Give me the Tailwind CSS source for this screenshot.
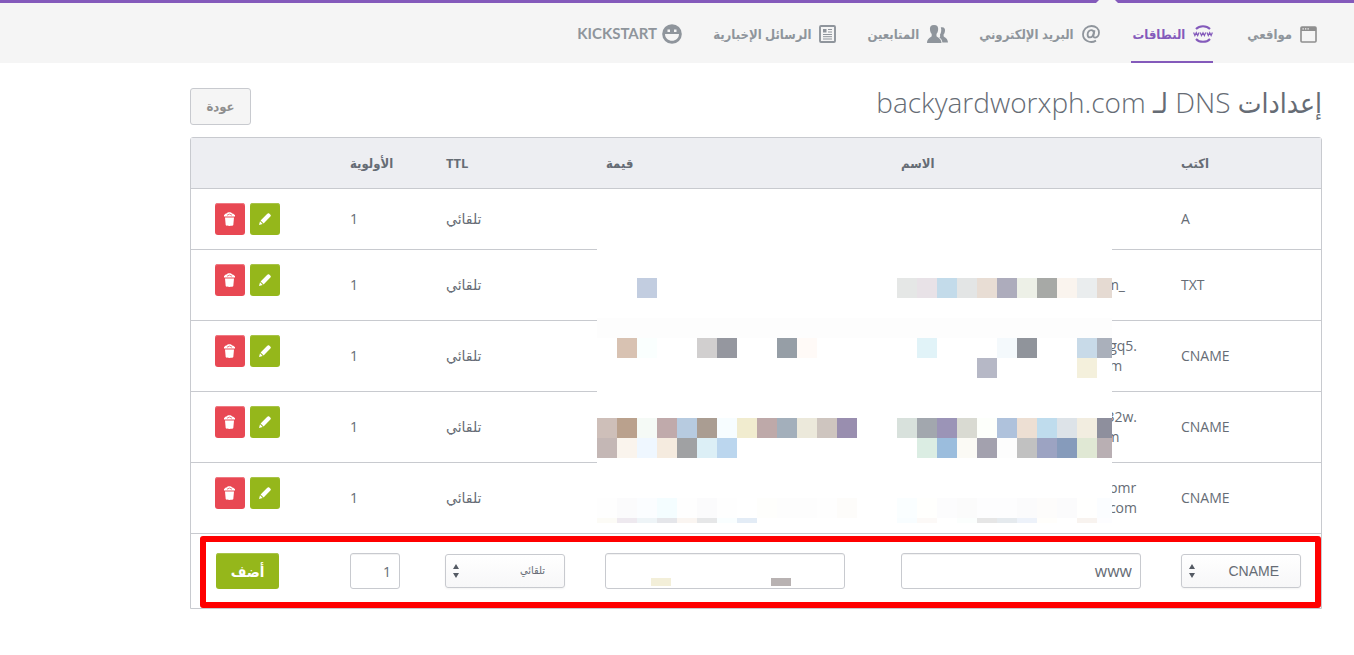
<!DOCTYPE html>
<html lang="ar" dir="rtl">

<head>
    <meta charset="UTF-8">
    <meta name="viewport" content="width=device-width, initial-scale=1.0">
    <title>إعدادات DNS</title>
    <script src="https://cdn.jsdelivr.net/npm/@tailwindcss/browser@4"></script>
</head>

<body class="bg-white min-h-screen font-['Open_Sans','DejaVu_Sans',sans-serif] text-sm text-[#666c75]">
    <!-- Top navigation -->
    <header class="relative border-t-3 border-[#845abb] bg-[#f5f5f5]">
        <svg class="absolute -top-[3px] right-[236px]" width="22" height="3" viewBox="0 0 22 3">
            <path d="M3 0H19L22 3H0Z" fill="#f5f5f5" />
        </svg>
        <nav class="flex items-stretch gap-[31px] h-[60px] pr-[37px] font-['Open_Sans','DejaVu_Sans_Condensed',sans-serif] text-[13px] font-bold text-[#8f959c]">
            <a href="#" class="flex items-center gap-2 border-b-2 border-transparent pl-[3px] pt-1">
                <svg width="17" height="17" viewBox="0 0 17 17">
                    <rect x="1" y="1" width="15" height="15" rx="1" fill="none" stroke="#8f8f8f" stroke-width="1.6" />
                    <path d="M1 1H16V5H1Z" fill="#8f8f8f" />
                    <path d="M2.5 2.2h1.3v1.3H2.5zM5 2.2h1.3v1.3H5zM7.5 2.2h1.3v1.3H7.5z" fill="#f5f5f5" />
                </svg>
                <span>مواقعي</span>
            </a>
            <a href="#" class="flex items-center gap-2 border-b-2 border-[#845abb] pl-[2px] pt-1 text-[#845abb]">
                <svg width="20" height="18" viewBox="0 0 20 18" fill="none" stroke="#845abb">
                    <path d="M3 4C6.500 .2 13.500 .2 17 4M3 14C6.500 17.800 13.500 17.800 17 14" stroke-width="2" />
                    <path d="M.6 7.500l1.300 3 1.400-2.800 1.400 2.800L6 7.500M7.200 7.500l1.300 3L10 7.700l1.400 2.800 1.300-3M14 7.500l1.300 3 1.400-2.800 1.400 2.800 1.300-3" stroke-width="1.2" />
                </svg>
                <span>النطاقات</span>
            </a>
            <a href="#" class="flex items-center gap-2 border-b-2 border-transparent pt-1">
                <svg width="18" height="18" viewBox="0 0 18 18" fill="none" stroke="#8f959c">
                    <path d="M14 15.6C8 19 1 15.4 1 9.3 1 4.6 4.8 1 9.6 1 14 1 17 3.8 17 7.6c0 3-1.8 5-3.8 5-1.4 0-2-.9-1.7-2.3l1-5" stroke-width="1.8" />
                    <path d="M11.8 7.6C11.6 6 10.6 5.2 9.2 5.2 7.2 5.2 5.6 7 5.6 9.4c0 1.8.9 3 2.4 3 1.8 0 3.3-1.9 3.8-4.8Z" stroke-width="1.8" />
                </svg>
                <span>البريد الإلكتروني</span>
            </a>
            <a href="#" class="flex items-center gap-2 border-b-2 border-transparent pt-1">
                <svg width="21" height="18" viewBox="0 0 21 18" fill="#8f959c">
                    <path d="M13.8 2.3C17 1.6 18.6 3.5 17.9 6.4c-.2 1.6-.9 2.4-1.3 3.2v1.6c1 1.4 4 1.6 4.4 6.3h-5.6c-.3-2.5-1.3-4-3-5.1 1.300-.8.6-2 .5-2.6.9-1.5 2-4.3.9-7.5Z" />
                    <path d="M7 0c3.2 0 4.6 1.8 4.1 5.1-.2 2-1 3.1-1.6 4v2.1c1.3 1.6 4.8 2 5 6.8H0c.1-4.8 3.4-5.2 4.7-6.8V9.1c-.7-.9-1.5-2-1.7-4C2.5 1.8 3.9 0 7 0Z" />
                </svg>
                <span>المتابعين</span>
            </a>
            <a href="#" class="flex items-center gap-2 border-b-2 border-transparent pt-1">
                <svg width="17" height="18" viewBox="0 0 17 18" fill="none" stroke="#8f959c">
                    <rect x="1" y="1" width="15" height="16" rx="1" stroke-width="1.9" />
                    <path d="M4 4h3.5v3.5H4z" fill="#8f959c" stroke="none" />
                    <path d="M9 4.5h4M9 7h4M4 9.5h9M4 11.7h9M4 14h9" />
                </svg>
                <span>الرسائل الإخبارية</span>
            </a>
            <a href="#" class="flex items-center gap-[5px] border-b-2 border-transparent pt-1">
                <svg width="20" height="20" viewBox="0 0 20 20">
                    <circle cx="10" cy="10" r="9.8" fill="#8f959c" />
                    <path d="M3 10H17C17 19 3 19 3 10Z" fill="#f5f5f5" />
                    <path d="M5.5 5.5H8V8H5.5zM12 5.5h2.5V8H12z" fill="#f5f5f5" />
                </svg>
                <span class="font-[Lato] text-[15px]">KICKSTART</span>
            </a>
        </nav>
    </header>

    <!-- Content -->
    <main class="pr-8 pl-[190px] pt-[22px]">
        <div class="flex items-start justify-between h-[52px]">
            <h1 class="font-['Open_Sans','DejaVu_Sans_Condensed',sans-serif] text-[28px] leading-[34px] font-light">إعدادات DNS لـ <bdi>backyardworxph.com</bdi></h1>
            <button type="button" class="mt-[3px] h-[37px] w-[61px] rounded-[3px] border border-[#c8cacf] bg-[#f5f5f5] font-['Open_Sans','DejaVu_Sans_Condensed',sans-serif] text-[13px] font-bold text-[#8f8f8f]">عودة</button>
        </div>

        <div class="relative">
            <table class="w-full table-fixed border-separate border-spacing-0 rounded-t-[3px] border border-[#c8cacf] text-left leading-5">
                <colgroup>
                    <col class="w-[160px]">
                    <col>
                    <col class="w-[295px]">
                    <col class="w-[160px]">
                    <col class="w-[96px]">
                    <col class="w-[139px]">
                </colgroup>
                <thead class="bg-[#edeef2] font-['Open_Sans','DejaVu_Sans_Condensed',sans-serif] text-[13px]">
                    <tr class="h-[51px]">
                        <th class="border-b border-[#c8cacf] pl-5 font-bold">اكتب</th>
                        <th class="border-b border-[#c8cacf] pl-5 font-bold">الاسم</th>
                        <th class="border-b border-[#c8cacf] pl-5 font-bold">قيمة</th>
                        <th class="border-b border-[#c8cacf] pl-5 font-bold">TTL</th>
                        <th class="border-b border-[#c8cacf] pl-5 font-bold">الأولوية</th>
                        <th class="border-b border-[#c8cacf]"></th>
                    </tr>
                </thead>
                <tbody id="records"></tbody>
                <tfoot>
                    <tr class="h-[74px]">
                        <td class="pl-5">
                            <div class="relative mr-auto w-[120px]">
                                <select aria-label="اكتب" class="block h-[34px] w-full appearance-none rounded-[3px] border border-[#c8cacf] bg-linear-to-b from-white to-[#f7f7f8] pr-[21px] font-['Liberation_Sans'] text-sm shadow-xs">
                                    <option>CNAME</option>
                                </select>
                                <svg class="pointer-events-none absolute left-[7px] top-[10px]" width="8" height="14" viewBox="0 0 8 14" fill="#555b64">
                                    <path d="M4 0L7 5H1ZM4 14L1 9H7Z" />
                                </svg>
                            </div>
                        </td>
                        <td class="pl-5"><input type="text" aria-label="الاسم" value="www" class="mr-auto block h-9 w-[240px] rounded-[3px] border border-[#c8cacf] bg-white px-2 text-base inset-shadow-2xs"></td>
                        <td class="pl-[19px]"><input type="text" aria-label="قيمة" class="mr-auto block h-9 w-[240px] rounded-[3px] border border-[#c8cacf] bg-white px-2 inset-shadow-2xs"></td>
                        <td class="pl-[19px]">
                            <div class="relative mr-auto w-[120px]">
                                <select aria-label="TTL" class="block h-[34px] w-full appearance-none rounded-[3px] border border-[#c8cacf] bg-linear-to-b from-white to-[#f7f7f8] pr-[19px] font-['DejaVu_Sans_Condensed'] text-[11px] shadow-xs">
                                    <option>تلقائي</option>
                                </select>
                                <svg class="pointer-events-none absolute left-[7px] top-[10px]" width="8" height="14" viewBox="0 0 8 14" fill="#555b64">
                                    <path d="M4 0L7 5H1ZM4 14L1 9H7Z" />
                                </svg>
                            </div>
                        </td>
                        <td class="pl-5"><input type="text" aria-label="الأولوية" value="1" class="mr-auto block h-9 w-[50px] rounded-[3px] border border-[#c8cacf] bg-white px-2 inset-shadow-2xs"></td>
                        <td class="pl-[25px]"><button type="button" class="mr-auto block h-9 w-[63px] rounded-[3px] bg-[#95b71b] font-['Open_Sans','DejaVu_Sans_Condensed',sans-serif] text-[15px] font-bold text-white shadow-[inset_0_1px_0_#a9c449]">أضف</button></td>
                    </tr>
                </tfoot>
            </table>

            <!-- Pixelated cover over names and values -->
            <svg id="mosaic" class="pointer-events-none absolute right-[210px] top-[52px]" width="515" height="397" viewBox="0 0 515 397" shape-rendering="crispEdges"></svg>

            <!-- Highlight on the new record row -->
            <div class="pointer-events-none absolute bottom-px left-[10px] right-px h-[72px] rounded-[3px] border-6 border-[#ff0000]"></div>
        </div>
    </main>

    <script>
        const records = [
            { type: 'A', name: '' },
            { type: 'TXT', name: '<div class="pr-9 text-right">_m</div>' },
            { type: 'CNAME', name: '<div dir="ltr" class="flex justify-end pr-6"><span>gq5.<br>m</span></div>' },
            { type: 'CNAME', name: '<div dir="ltr" class="flex justify-end pr-6"><span>32w.<br>m</span></div>' },
            { type: 'CNAME', name: '<div dir="ltr" class="flex justify-end pr-6"><span>bmr<br>com</span></div>' }
        ];

        document.getElementById('records').innerHTML = records.map((r) => `
            <tr class="${r.name ? 'h-[71px]' : 'h-[61px]'}">
                <td class="border-b border-[#c8cacf] pl-5">${r.type}</td>
                <td class="border-b border-[#c8cacf]">${r.name}</td>
                <td class="border-b border-[#c8cacf]"></td>
                <td class="border-b border-[#c8cacf] pl-5">تلقائي</td>
                <td class="border-b border-[#c8cacf] pl-5">1</td>
                <td class="border-b border-[#c8cacf] pl-6 pt-[14px] align-top">
                    <div class="flex justify-end gap-[5px]">
                        <button type="button" aria-label="تعديل" class="flex h-8 w-[30px] items-center justify-center rounded-[3px] bg-[#95b71b] shadow-[inset_0_1px_0_#a9c449]">
                            <svg width="12" height="12" viewBox="0 0 12 12" fill="#fff"><path d="M0 12L1 8.3 3.7 11ZM1.6 7.4L8.3.7C9 0 9.6 0 10.2.5L11.5 1.8C12 2.4 12 3 11.4 3.6L4.6 10.4Z" /></svg>
                        </button>
                        <button type="button" aria-label="حذف" class="flex h-8 w-[30px] items-center justify-center rounded-[3px] bg-[#e84853] shadow-[inset_0_1px_0_#f07a83]">
                            <svg width="12" height="14" viewBox="0 0 12 14" fill="#fff"><path d="M0 4.5V3C1 3 .6 1.3 2.5 1.5 3.5-.2 7-.4 8.3 1.4 10 1.4 10 3 11 3V4.5ZM1 5.5H10L9.3 13C9 14.2 2 14.2 1.7 13Z" /><path d="M3 3.2Q5.5 1 8 3.2" fill="none" stroke="#e84853" stroke-width=".7" /></svg>
                        </button>
                    </div>
                </td>
            </tr>`).join('');

        // [x, y, height, colours of consecutive 20px blocks]
        const blocks = [
            [40, 89, 20, ['#c2cde0']],
            [300, 89, 20, ['#e5e7e6', '#e8e2e7', '#c3dbea', '#e3e5e5', '#e8ddd4', '#adacbc', '#edf0e7', '#a7a9a6', '#faf4ee', '#eaedee', '#e5dad2']],
            [20, 149, 20, ['#d8c2b2', '#fafffe', '#ffffff', '#ffffff', '#d1cfcf', '#95979f', '#ffffff', '#ffffff', '#969ea6', '#fffaf7']],
            [320, 149, 20, ['#e1f3f8', '#ffffff', '#ffffff', '#ffffff', '#f4f9fc', '#90949b', '#ffffff', '#ffffff', '#c8dae8', '#aab0bb']],
            [380, 169, 20, ['#b6b8c6']],
            [480, 169, 20, ['#f4f0dc']],
            [0, 229, 20, ['#cebfb9', '#baa18d', '#f5faf6', '#c0aaab', '#b7cbe0', '#aa9d92', '#f7fdff', '#f1eccf', '#bea9a9', '#a3afbb', '#ece9db', '#cec5bf', '#998eaf']],
            [0, 249, 20, ['#c4b7b5', '#faf4ed', '#eff7ff', '#f5ebdf', '#a0a1a3', '#dceff6', '#bbd6ee']],
            [300, 229, 20, ['#d8e1dc', '#a2a7ae', '#9b94b7', '#d9dad2', '#fdfffb', '#afc2dc', '#eddfd3', '#bfdced', '#dde3e8', '#f2ede0', '#8e8f9d']],
            [320, 249, 20, ['#dbede3', '#9bbddd', '#fbfaf5', '#a3a1ae', '#fdfdfd', '#c1c1c1', '#9ca3c2', '#869bbb', '#e0e8d4', '#b9afb3']],
            [0, 309, 20, ['#fefefe', '#fbfbfc', '#fbfdff', '#f4fdff', '#fefefe', '#fbfbfc', '#fefefe', '#ffffff', '#fefefc', '#fdfdfd', '#fdfdfd', '#fefefe', '#fdfcfa']],
            [300, 309, 20, ['#fafeff', '#fffffd', '#fcfcfd', '#fbfbfb', '#fdfdfe', '#fdfdfe', '#fbfbfc', '#fdfcfb', '#fbfbfc', '#fffffe', '#fbfdff']],
            [0, 329, 5, ['#fcfbf6', '#eee9ef', '#eef4f7', '#e5e6ea', '#faf5f1', '#e6e7e8', '#f9feff', '#e3ecf6']],
            [300, 329, 5, ['#f8fdff', '#fcf9f7', '#ffffff', '#fbfefd', '#e6e6e6', '#e5eaee', '#edf2fa', '#fffefb', '#ffffff', '#f8f3ef', '#fdfdff']],
            [54, 389, 8, ['#f3efd9']],
            [174, 389, 8, ['#b8b2b2']]
        ];

        document.getElementById('mosaic').innerHTML =
            '<rect width="515" height="334" fill="#ffffff" /><rect y="129" width="515" height="20" fill="#fdfdfd" />' +
            blocks.map(([x, y, h, colors]) => colors.map((c, i) =>
                `<rect x="${x + i * 20}" y="${y}" width="20" height="${h}" fill="${c}" />`).join('')).join('');
    </script>
</body>

</html>
